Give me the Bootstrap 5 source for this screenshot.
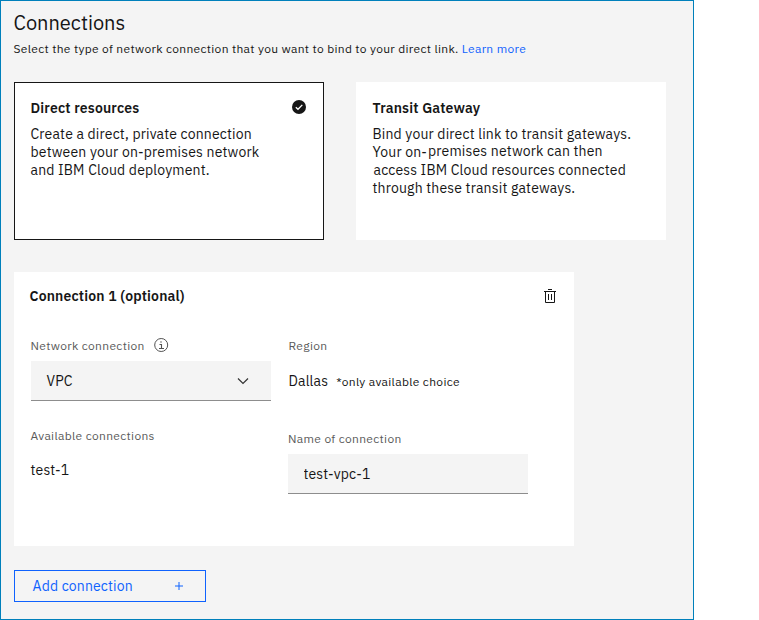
<!DOCTYPE html>
<html lang="en">
<head>
<meta charset="utf-8">
<meta name="viewport" content="width=device-width, initial-scale=1">
<title>Connections</title>
<link href="https://cdn.jsdelivr.net/npm/bootstrap@5.3.0/dist/css/bootstrap.min.css" rel="stylesheet">
<style>
  body { font-family: "IBM Plex Sans", Roboto, "Liberation Sans", sans-serif; font-size: 14px; line-height: 18px; letter-spacing: .17px; color: #161616; background: #fff; }
  .connections-page { width: 694px; height: 620px; padding: 9px 13px 0; background: #f4f4f4; border: 1px solid #0080bb; }
  .page-title { font-size: 20px; line-height: 26px; letter-spacing: 0; font-weight: 400; margin-left: -.5px; }
  .page-intro { font-size: 12px; letter-spacing: .315px; margin-left: -.5px; }
  .plain-link { color: #0f62fe; }
  .tile-row { gap: 32px; margin-bottom: 32px; }
  .tile { width: 310px; height: 158px; padding: 16px 16px 16px 15.5px; background: #fff; border: 1px solid #fff; }
  .tile.selected { border-color: #161616; }
  .tile-title, .panel-title { font-size: 14px; line-height: 18px; font-weight: 600; }
  .tile-text span { display: block; white-space: nowrap; }
  .tile-text .raised { display: inline-block; transform: translateY(-1px); margin-left: 1px; }
  .tile-text .shifted { padding-left: 1px; }
  .tile-check { width: 16px; height: 16px; }
  .connection-panel { width: 560px; height: 274px; padding: 15px 16px 0; background: #fff; }
  .panel-title { margin-left: -.5px; }
  .field-label { margin-bottom: 7px; font-size: 12px; line-height: 16px; letter-spacing: .32px; color: #5a5a5a; }
  .field-box { width: 240px; height: 40px; padding: 0 15.5px; color: #161616; background-color: #f4f4f4; border: 0; border-bottom: 1px solid #8d8d8d; border-radius: 0; font-size: 14px; letter-spacing: .16px; }
  .field-box.choice { padding: 0 20px 0 15.5px; }
  .first-column { width: 258.5px; padding-left: 1px; }
  .fields { margin-top: 33px; }
  .note { font-size: 12px; letter-spacing: .32px; padding-top: 2px; }
  .saved-label { margin: 27px 0 17px; }
  .label-text { margin-left: -.5px; }
  .add-button { width: 192px; height: 32px; padding: 0 21px 0 17.5px; color: #0f62fe; border: 1px solid #0f62fe; border-radius: 0; font-size: 14px; line-height: 18px; letter-spacing: .16px; }
  .region-value { height: 40px; }
  .name-field { margin-top: 30px; margin-left: -.5px; }
</style>
<script src="https://cdn.jsdelivr.net/npm/bootstrap@5.3.0/dist/js/bootstrap.bundle.min.js"></script>
</head>
<body>
<main class="connections-page">
  <h1 class="page-title mb-1">Connections</h1>
  <p class="page-intro mb-4">Select the type of network connection that you want to bind to your direct link. <a class="plain-link text-decoration-none" href="#">Learn more</a></p>

  <div class="tile-row d-flex">
    <section class="tile selected">
      <div class="d-flex justify-content-between mb-2">
        <h2 class="tile-title mb-0">Direct resources</h2>
        <svg class="tile-check" viewBox="0 0 16 16" aria-hidden="true"><circle cx="8" cy="8" r="7" fill="#161616"/><path d="M4.8 8.2 7 10.3l4.3-4.4" fill="none" stroke="#fff" stroke-width="1.3"/></svg>
      </div>
      <p class="tile-text mb-0"><span>Create a direct, private connection</span> <span>between your on-premises network</span> <span>and IBM Cloud deployment.</span></p>
    </section>
    <section class="tile">
      <h2 class="tile-title mb-2">Transit Gateway</h2>
      <p class="tile-text mb-0"><span>Bind your direct link to transit gateways.</span> <span>Your on-<span class="raised">premises network can then</span></span> <span class="shifted">access IBM Cloud resources connected</span> <span>through these transit gateways.</span></p>
    </section>
  </div>

  <section class="connection-panel mb-4">
    <div class="d-flex justify-content-between">
      <h2 class="panel-title mb-0">Connection 1 (optional)</h2>
      <svg width="16" height="18" viewBox="0 0 16 18" aria-label="Delete" fill="none" stroke="#161616"><path d="M6 2.5h4M2 4.5h12M3.5 4.5v11h9v-11M6.5 7v6M9.5 7v6"/></svg>
    </div>
    <div class="fields d-flex">
      <div class="first-column">
        <div class="d-flex field-label"><span class="label-text">Network connection</span>
          <svg class="ms-2" width="16" height="16" viewBox="0 0 16 16" aria-hidden="true" fill="none" stroke="#525252"><circle cx="8.2" cy="7" r="6.5"/><path d="M6.5 6.5h2v4M6 10.5h5M7.2 4h1.6" stroke-width="1.1"/></svg>
        </div>
        <div class="field-box choice d-flex align-items-center justify-content-between">VPC
          <svg width="16" height="16" viewBox="0 0 16 16" aria-hidden="true"><path d="m3 5.5 5 5 5-5" fill="none" stroke="#333" stroke-width="1.2"/></svg>
        </div>
        <div class="field-label saved-label"><span class="label-text">Available connections</span></div>
        <div><span class="label-text">test-1</span></div>
      </div>
      <div>
        <div class="field-label">Region</div>
        <div class="region-value d-flex align-items-center"><span>Dallas</span><span class="note ms-2">*only available choice</span></div>
        <div class="name-field">
          <label class="field-label d-block" for="connection-name">Name of connection</label>
          <input class="field-box d-block" id="connection-name" type="text" value="test-vpc-1">
        </div>
      </div>
    </div>
  </section>

  <button class="add-button btn d-flex align-items-center justify-content-between" type="button"><span>Add connection</span>
    <svg width="10" height="10" viewBox="0 0 10 10" aria-hidden="true"><path d="M5 1v8M1 5h8" stroke="#0f62fe"/></svg>
  </button>
</main>
</body>
</html>
